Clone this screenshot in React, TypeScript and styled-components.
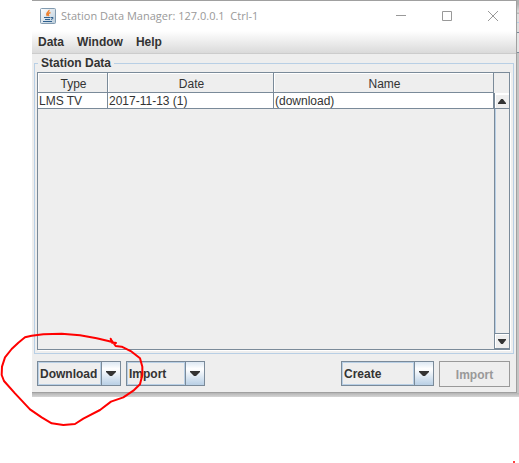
import React from "react";
import styled, { createGlobalStyle } from "styled-components";

const line = "#7a8a99";
const pale = "#b8cfe5";
const face = "#eeeeee";
const ink = "#333333";

const GlobalStyle = createGlobalStyle`
  * { box-sizing: border-box; }
  body { margin: 0; background: #fff; color: ${ink}; font: 12px/16px "Liberation Sans", Arial, sans-serif; }
  button, select { font: inherit; color: inherit; margin: 0; }
`;

const Page = styled.div`
  position: relative;
  min-height: 100vh;
  padding-left: 32px;
`;

const Shade = styled.div`
  padding: 0 2px 4px 0;
  background: linear-gradient(#b4b4b4, #d6d6d6) bottom / 100% 4px no-repeat,
    linear-gradient(#b0b0b0 0 4px, #dcdcdc 12px, #b8b8b8 13px 14px, #dedede 14px 22px, ${pale} 22px 23px, #dedede 23px 32px, ${line} 32px 33px, #e4e4e4 33px 52px, ${line} 52px 53px, #c4c4c4 53px);
`;

const Window = styled.main`
  display: flex;
  flex-direction: column;
  background: ${face};
  border: solid #a0a0a0;
  border-width: 1px 1px 1px 0;
`;

const TitleBar = styled.header`
  display: flex;
  align-items: center;
  height: 30px;
  padding-left: 8px;
  background: #fff;
`;

const Title = styled.h1`
  flex: 1;
  margin: 0 0 0 5px;
  font: 11px/16px "Open Sans", "Noto Sans", sans-serif;
  color: #999;
  white-space: pre;
`;

const Caption = styled.button`
  display: grid;
  place-items: center;
  width: 46px;
  height: 30px;
  padding: 0;
  border: 0;
  background: none;
`;

const MenuBar = styled.nav`
  display: flex;
  gap: 13px;
  height: 23px;
  padding: 3px 6px;
  border-bottom: 1px solid #ccc;
  background: linear-gradient(#fff, #dadada);
`;

const MenuItem = styled.button`
  padding: 0;
  border: 0;
  background: none;
  font-weight: bold;
  line-height: 16px;
`;

const Group = styled.fieldset`
  min-width: 0;
  margin: 1px 2px 0;
  padding: 1px 3px 3px 2px;
  border: 1px solid ${pale};
`;

const Legend = styled.legend`
  margin-left: 1px;
  padding: 0 3px;
  font-weight: bold;
`;

const Pane = styled.div`
  display: grid;
  grid-template-columns: 1fr 15px;
  grid-template-rows: 20px 1fr;
  min-height: 278px;
  border: 1px solid ${line};
  box-shadow: 1px 1px 0 #fff;
`;

const Table = styled.table`
  grid-row: 1 / 3;
  align-self: start;
  width: 100%;
  border-collapse: separate;
  border-spacing: 0;
  table-layout: fixed;
`;

const Col = styled.col<{ $width?: string }>`
  width: ${(p) => p.$width ?? "auto"};
`;

const Head = styled.th`
  height: 20px;
  padding: 2px 0 0 2px;
  border: solid ${line};
  border-width: 0 1px 1px 0;
  box-shadow: inset 1px 1px 0 #fff;
  font-weight: normal;
  line-height: 16px;
`;

const Cell = styled.td`
  height: 16px;
  padding: 1px 1px 0;
  border: solid ${line};
  border-width: 0 1px 1px 0;
  background: #fff;
  line-height: 14px;
`;

const ScrollBar = styled.div`
  grid-area: 2 / 2;
  display: flex;
  flex-direction: column;
  justify-content: space-between;
  border-left: 1px solid ${line};
  box-shadow: inset 1px 0 0 ${pale};
`;

const ScrollButton = styled.button`
  display: grid;
  place-items: center;
  height: 16px;
  padding: 0;
  border: solid ${line};
  border-width: 1px 0;
  background: ${face};
  box-shadow: inset 1px 1px 0 #fff;
  &:first-child { border-top-color: #fff; }
`;

const Actions = styled.footer`
  display: flex;
  align-items: flex-start;
  gap: 5px;
  padding: 7px 6px 5px 5px;
`;

const Spacer = styled.div`
  flex: 1;
`;

const Combo = styled.label<{ $width: number }>`
  display: grid;
  grid-template-columns: 1fr 19px;
  width: ${(p) => p.$width}px;
  height: 25px;
  border: 1px solid ${line};
`;

const Choice = styled.select`
  grid-area: 1 / 1 / 2 / 3;
  appearance: none;
  width: 100%;
  padding: 0 22px 0 1px;
  border: 1px solid ${pale};
  border-radius: 0;
  background: ${face};
  font-weight: bold;
`;

const ComboArrow = styled.span`
  grid-area: 1 / 2;
  display: grid;
  place-items: center;
  border-left: 1px solid ${line};
  box-shadow: -1px 0 0 ${pale};
  background: linear-gradient(#dde8f3, #fff 30%, ${pale});
  pointer-events: none;
`;

const PlainButton = styled.button`
  width: 71px;
  height: 26px;
  padding: 1px 0 0;
  border: 1px solid #999;
  background: ${face};
  font-weight: bold;
  &:disabled { color: #999; }
`;

const Scribble = styled.svg`
  position: absolute;
  left: 0;
  top: 320px;
  pointer-events: none;
`;

const Speck = styled.span`
  position: absolute;
  right: 4px;
  top: 461px;
  width: 2px;
  height: 2px;
  border-radius: 1px;
  background: #f00;
`;

function Triangle({ up = false, size = 9 }: { up?: boolean; size?: number }) {
  return (
    <svg width={size} height="5" viewBox="0 0 10 5" preserveAspectRatio="none" aria-hidden="true">
      <path d={up ? "M0 5V4L4 0H6L10 4V5Z" : "M0 0H10V1L6 5H4L0 1Z"} fill={ink} />
    </svg>
  );
}

function JavaIcon() {
  return (
    <svg width="16" height="16" viewBox="0 0 16 16" fill="none" aria-hidden="true">
      <defs>
        <linearGradient id="tile" x2="1" y2="1">
          <stop stopColor="#fff" />
          <stop offset="1" stopColor="#b9cbd9" />
        </linearGradient>
      </defs>
      <rect x=".5" y=".5" width="15" height="15" rx="1" fill="url(#tile)" stroke="#829bb0" />
      <path d="M9 2C9.500 4 5 4.500 7.500 8M10.500 4.500C8 5.500 7.500 6 9 8" stroke="#ee8130" strokeWidth="1.500" />
      <path d="M4 9.500H10.500M5 11.500H10M3 13.500H12M11 9.500H13V10.500L11 11.500" stroke="#2f608f" />
    </svg>
  );
}

function ComboBox({ label, width }: { label: string; width: number }) {
  return (
    <Combo $width={width}>
      <Choice aria-label={label}>
        <option>{label}</option>
      </Choice>
      <ComboArrow><Triangle size={10} /></ComboArrow>
    </Combo>
  );
}

export default function App() {
  return (
    <Page>
      <GlobalStyle />
      <Shade>
        <Window>
          <TitleBar>
            <JavaIcon />
            <Title>{"Station Data Manager: 127.0.0.1  Ctrl-1"}</Title>
            <Caption aria-label="Minimize">
              <svg width="10" height="10" stroke="#999"><path d="M0 4.500H10" /></svg>
            </Caption>
            <Caption aria-label="Maximize">
              <svg width="10" height="10" stroke="#999" fill="none"><path d="M.5.5H9.500V9.500H.5Z" /></svg>
            </Caption>
            <Caption aria-label="Close">
              <svg width="10" height="10" stroke="#999"><path d="M0 0 10 10M10 0 0 10" /></svg>
            </Caption>
          </TitleBar>
          <MenuBar>
            <MenuItem>Data</MenuItem>
            <MenuItem>Window</MenuItem>
            <MenuItem>Help</MenuItem>
          </MenuBar>
          <Group>
            <Legend>Station Data</Legend>
            <Pane>
              <Table>
                <colgroup>
                  <Col $width="70px" />
                  <Col $width="166px" />
                  <Col />
                </colgroup>
                <thead>
                  <tr><Head>Type</Head><Head>Date</Head><Head>Name</Head></tr>
                </thead>
                <tbody>
                  <tr><Cell>LMS TV</Cell><Cell>2017-11-13 (1)</Cell><Cell>(download)</Cell></tr>
                </tbody>
              </Table>
              <ScrollBar>
                <ScrollButton aria-label="Scroll up"><Triangle up size={8} /></ScrollButton>
                <ScrollButton aria-label="Scroll down"><Triangle size={8} /></ScrollButton>
              </ScrollBar>
            </Pane>
          </Group>
          <Actions>
            <ComboBox label="Download" width={84} />
            <ComboBox label="Import" width={79} />
            <Spacer />
            <ComboBox label="Create" width={93} />
            <PlainButton disabled>Import</PlainButton>
          </Actions>
        </Window>
      </Shade>
      <Scribble width="150" height="110" viewBox="0 0 450 330" fill="none" aria-hidden="true">
        <path
          d="M332 56 336 68 348 69 325 63 290 55 240 46 185 41 130 43 95 47 75 52 55 68 35 87 15 112 6 140 5 165 12 183 45 220 90 268 125 292 155 310 190 315 225 312 250 296 300 270 333 245 370 232 400 212 420 193 427 165 427 140 420 115 395 95 365 80 347 78 334 60"
          stroke="#f00"
          strokeWidth="6"
          strokeLinejoin="round"
          strokeLinecap="round"
        />
      </Scribble>
      <Speck />
    </Page>
  );
}
